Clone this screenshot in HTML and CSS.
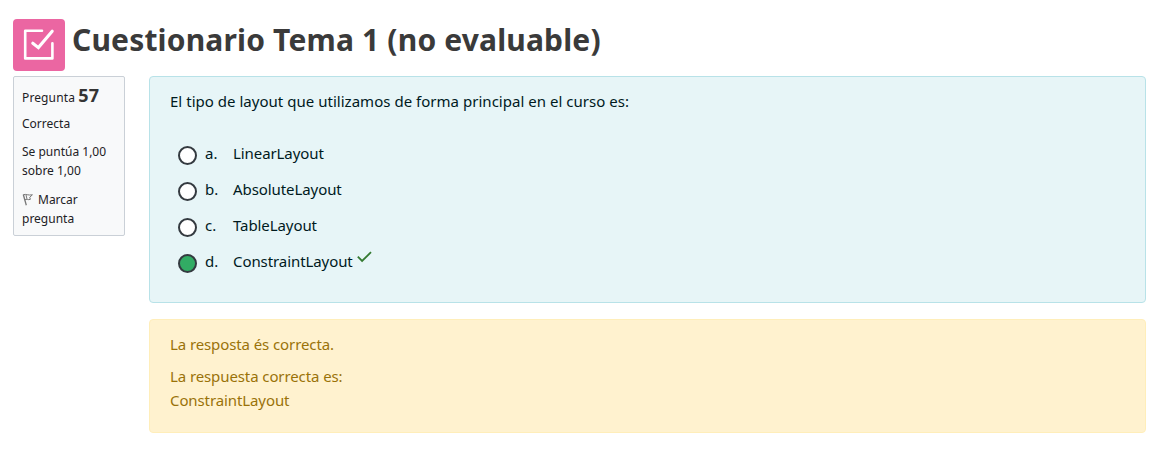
FILE: index.html
```html
<!DOCTYPE html>
<html lang="es">
<head>
<meta charset="utf-8">
<title>Cuestionario Tema 1</title>
<link rel="stylesheet" href="styles.css">
</head>
<body>
<header class="page-header">
  <div class="activity-icon">
    <svg width="52" height="52" viewBox="0 0 52 52" fill="none" stroke="#fff" stroke-width="2.6" stroke-linecap="round" stroke-linejoin="round">
      <path d="M29 11.8H12.2V39.4H39.4V24.2"/>
      <path d="M19.8 24.2L25.4 28.6L39.2 12.2" stroke-width="3.1" stroke-linejoin="miter"/>
    </svg>
  </div>
  <h1 class="page-title">Cuestionario Tema 1 (no evaluable)</h1>
</header>
<main class="question">
  <aside class="info">
    <h2 class="info-no">Pregunta <span class="qno">57</span></h2>
    <div class="info-state">Correcta</div>
    <div class="info-grade">Se puntúa 1,00<br>sobre 1,00</div>
    <div class="info-flag"><svg class="flag" width="12" height="13" viewBox="0 0 12 13" fill="none" stroke="#777" stroke-width="1"><path d="M1.3 1.5L4.3 12.2" stroke-width="1.3"/><path d="M1.5 1.7C4 .7 6 2.7 10.4 1.8L7.7 4.3L8.4 6.3C6 7.3 4.6 5.7 2.8 6.8M4 2L5 6"/></svg>Marcar<br>pregunta</div>
  </aside>
  <div class="content">
    <section class="formulation">
      <p class="qtext">El tipo de layout que utilizamos de forma principal en el curso es:</p>
      <ul class="answers">
        <li class="answer"><span class="radio"></span><span class="letter">a.</span><span class="label">LinearLayout</span></li>
        <li class="answer"><span class="radio"></span><span class="letter">b.</span><span class="label">AbsoluteLayout</span></li>
        <li class="answer"><span class="radio"></span><span class="letter">c.</span><span class="label">TableLayout</span></li>
        <li class="answer"><span class="radio checked"></span><span class="letter">d.</span><span class="label">ConstraintLayout</span><svg class="tick" width="15" height="12" viewBox="0 0 15 12" fill="none" stroke="#357a32" stroke-width="1.8"><path d="M.8 5.7L5.1 10L14 1.2"/></svg></li>
      </ul>
    </section>
    <section class="outcome">
      <p class="feedback">La resposta és correcta.</p>
      <p class="feedback">La respuesta correcta es:<br>ConstraintLayout</p>
    </section>
  </div>
</main>
</body>
</html>
```
FILE: styles.css
```css
* { box-sizing: border-box; }
body { margin: 0; padding: 19px 15px 0 13px; background: #fff; color: #1d2125; font: 15px/24px "Noto Sans", "Open Sans", sans-serif; }
h1, h2, p, ul { margin: 0; padding: 0; }
.page-header { display: flex; height: 57px; gap: 7px; }
.activity-icon { width: 52px; height: 52px; border-radius: 4px; background: #eb66a2; }
.activity-icon svg { display: block; }
.page-title { font-size: 30px; line-height: 42px; font-weight: 700; color: #3a3a3a; white-space: nowrap; letter-spacing: .17px; }
.question { display: flex; align-items: flex-start; gap: 24px; }
.info { width: 112px; height: 160px; padding: 7px 7px 0 8px; border: 1px solid #cad0d7; border-radius: 2px; background: #f8f9fa; font-size: 12px; line-height: 19px; white-space: nowrap; }
.info-no { height: 30px; font-size: 12px; font-weight: 400; line-height: 22px; letter-spacing: .12px; }
.qno { font-size: 18px; font-weight: 700; color: #343434; }
.info-state { height: 28px; }
.info-grade { height: 48px; }
.flag { margin: 0 4px -2px 0; }
.content { flex: 1; display: flex; flex-direction: column; gap: 16px; }
.formulation { height: 227px; padding: 12px 20px; border: 1px solid #b8e2e8; border-radius: 4px; background: #e7f5f7; color: #001a1e; }
.qtext { letter-spacing: .025px; }
.answers { list-style: none; padding: 24px 0 0 8px; }
.answer { display: flex; height: 36px; padding-top: 4px; white-space: nowrap; }
.radio { width: 19px; height: 19px; margin: 5px 8px 0 0; border: 2px solid #343a40; border-radius: 50%; background: #fff; }
.checked { background: #32ac64; }
.letter { width: 28px; }
.label { letter-spacing: -.08px; }
.tick { margin: 2px 0 0 4px; }
.outcome { height: 114px; padding: 12px 20px; border: 1px solid #ffeeba; border-radius: 4px; background: #fff2cf; color: #9a7209; }
.feedback { margin-bottom: 8px; letter-spacing: -.1px; }
```
